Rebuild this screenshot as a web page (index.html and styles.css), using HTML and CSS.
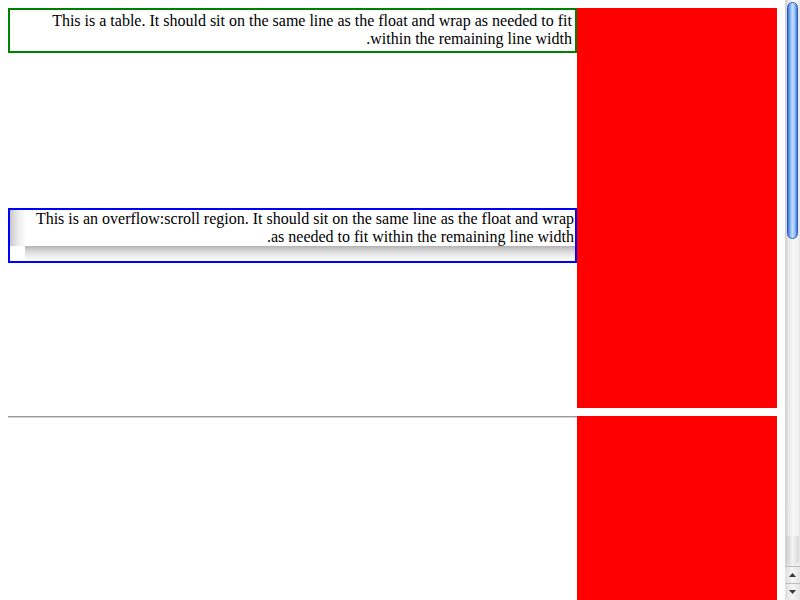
FILE: index.html
```html
<!DOCTYPE html>
<html dir="rtl">
<head>
<meta charset="utf-8">
<title>Float test</title>
<link rel="stylesheet" href="styles.css">
</head>
<body>
<div class="float-box float-a"></div>
<table class="tbl"><tr><td class="cell">This is a table. It should sit on the same line as the float and wrap as needed to fit within the remaining line width.</td></tr></table>
<div class="scroller">
  <div class="scroll-text">This is an overflow:scroll region. It should sit on the same line as the float and wrap as needed to fit within the remaining line width.</div>
  <div class="sb-v"></div>
  <div class="sb-h"></div>
  <div class="sb-corner"></div>
</div>
<div class="section2">
  <div class="float-box float-b"></div>
  <hr class="rule">
</div>

<div class="page-scrollbar" dir="ltr">
  <div class="ps-thumb"></div>
  <div class="ps-track"></div>
  <div class="ps-cap"></div>
  <div class="ps-btn ps-up">
    <svg width="7" height="4" viewBox="0 0 7 4"><path d="M3.5 0 L7 4 L0 4 Z" fill="#3a3a3a"/></svg>
  </div>
  <div class="ps-btn ps-down">
    <svg width="7" height="4" viewBox="0 0 7 4"><path d="M0 0 L7 0 L3.5 4 Z" fill="#3a3a3a"/></svg>
  </div>
</div>
</body>
</html>
```
FILE: styles.css
```css
html {
  background: #fff;
}
body {
  margin: 8px 23px 0 8px;
  font-family: "Liberation Serif", "Times New Roman", serif;
  font-size: 16px;
  line-height: 18px;
  color: #000;
}
.float-box {
  float: right;
  width: 200px;
  background: #ff0000;
}
.float-a {
  height: 400px;
}
.float-b {
  height: 184px;
}
.tbl {
  width: 569px;
  border: 2px solid #008000;
  border-collapse: collapse;
  border-spacing: 0;
}
.cell {
  padding: 2px 3px 3px 3px;
  text-align: right;
}

/* overflow:scroll region with its (drawn) scrollbars */
.scroller {
  box-sizing: border-box;
  width: 569px;
  height: 55px;
  margin-top: 155px;
  border: 2px solid #0000ff;
  display: grid;
  grid-template-columns: 1fr 15px;
  grid-template-rows: 36px 15px;
  overflow: hidden;
}
.scroll-text {
  padding-right: 1px;
  overflow: hidden;
}
.sb-v {
  background: linear-gradient(to right, #c6c6c6, #dedede 30%, #f0f0f0 65%, #fbfbfb);
}
.sb-h {
  background: linear-gradient(to bottom, #b2b2b2, #cfcfcf 25%, #e6e6e6 55%, #f6f6f6 85%, #fcfcfc);
}
.sb-corner {
  background: #fff;
}

.section2 {
  clear: both;
  padding-top: 8px;
}
.rule {
  margin: 0;
  height: 0;
  border: 0;
  border-top: 1px solid #9a9a9a;
  border-bottom: 1px solid #d4d4d4;
}

/* viewport scrollbar, drawn over the right edge */
.page-scrollbar {
  position: fixed;
  top: 0;
  right: 0;
  width: 15px;
  height: 600px;
  display: flex;
  flex-direction: column;
  background: linear-gradient(to right, #cfcfcf, #e9e9e9 25%, #f7f7f7 55%, #f2f2f2 85%, #e4e4e4);
}
.ps-thumb {
  box-sizing: border-box;
  height: 237px;
  margin: 2px 2px 0 2px;
  border: 1px solid #2457c8;
  border-radius: 6px;
  background: linear-gradient(to right, #3d74dc, #7eb0f0 22%, #c2ddfb 48%, #a4c9f7 70%, #6c9fe9 88%, #3d6fd6);
}
.ps-track {
  flex: 1;
}
.ps-cap {
  height: 30px;
  margin: 0 1px;
  border-radius: 0 0 7px 7px;
  background: linear-gradient(to right, #cccccc, #f4f4f4 50%, #d8d8d8);
}
.ps-btn {
  box-sizing: border-box;
  height: 17px;
  border-top: 1px solid #bdbdbd;
  display: flex;
  align-items: center;
  justify-content: center;
  background: linear-gradient(to right, #dedede, #f5f5f5 50%, #e4e4e4);
}
.ps-btn svg {
  display: block;
}
```
